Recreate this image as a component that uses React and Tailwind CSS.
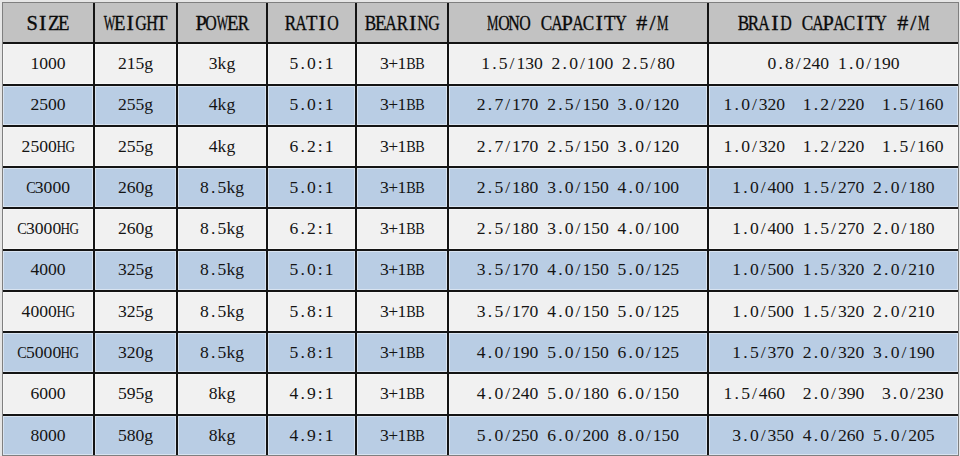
const headers = ['SIZE', 'WEIGHT', 'POWER', 'RATIO', 'BEARING', 'MONO CAPACITY #/M', 'BRAID CAPACITY #/M'];

const rows = [
    ['1000', '215g', '3kg', '5.0:1', '3+1BB', '1.5/130 2.0/100 2.5/80', '0.8/240 1.0/190'],
    ['2500', '255g', '4kg', '5.0:1', '3+1BB', '2.7/170 2.5/150 3.0/120', '1.0/320  1.2/220  1.5/160'],
    ['2500HG', '255g', '4kg', '6.2:1', '3+1BB', '2.7/170 2.5/150 3.0/120', '1.0/320  1.2/220  1.5/160'],
    ['C3000', '260g', '8.5kg', '5.0:1', '3+1BB', '2.5/180 3.0/150 4.0/100', '1.0/400 1.5/270 2.0/180'],
    ['C3000HG', '260g', '8.5kg', '6.2:1', '3+1BB', '2.5/180 3.0/150 4.0/100', '1.0/400 1.5/270 2.0/180'],
    ['4000', '325g', '8.5kg', '5.0:1', '3+1BB', '3.5/170 4.0/150 5.0/125', '1.0/500 1.5/320 2.0/210'],
    ['4000HG', '325g', '8.5kg', '5.8:1', '3+1BB', '3.5/170 4.0/150 5.0/125', '1.0/500 1.5/320 2.0/210'],
    ['C5000HG', '320g', '8.5kg', '5.8:1', '3+1BB', '4.0/190 5.0/150 6.0/125', '1.5/370 2.0/320 3.0/190'],
    ['6000', '595g', '8kg', '4.9:1', '3+1BB', '4.0/240 5.0/180 6.0/150', '1.5/460  2.0/390  3.0/230'],
    ['8000', '580g', '8kg', '4.9:1', '3+1BB', '5.0/250 6.0/200 8.0/150', '3.0/350 4.0/260 5.0/205'],
];

// rough glyph widths (em) of the serif caps, so each letter can be squeezed into a half-width cell
const capWidth = {
    A: 0.72, B: 0.67, C: 0.67, D: 0.72, E: 0.61, G: 0.72, H: 0.72, I: 0.33, M: 0.89,
    N: 0.72, O: 0.72, P: 0.56, R: 0.67, S: 0.56, T: 0.61, W: 0.94, Y: 0.72, Z: 0.61, '#': 0.5,
};

function HalfWidth({ text, head }) {
    return (
        <span className="inline-flex whitespace-nowrap">
            {text.split('').map((ch, i) => {
                const w = capWidth[ch];
                const sx = w ? Math.min(1, (head ? 0.52 : 0.54) / w) : 1;
                return (
                    <span
                        key={i}
                        className={`inline-flex justify-center ${head ? 'w-[10.65px]' : 'w-[8.8px]'}`}
                    >
                        {w ? (
                            <span className="inline-block" style={{ transform: `scaleX(${sx})` }}>{ch}</span>
                        ) : (
                            ch
                        )}
                    </span>
                );
            })}
        </span>
    );
}

export default function App() {
    return (
        <div className="w-[960px] h-[456px] bg-[#e6e6e6] pl-[2px] pt-[2px] pr-[1px] overflow-hidden">
            <div className="h-full border border-[#7f7f7f]">
                <div className="h-full grid grid-cols-[90px_81px_88px_87px_90px_258px_minmax(0,1fr)] grid-rows-[repeat(11,minmax(0,1fr))] gap-[2px] bg-[#141414]">
                    {headers.map((h) => (
                        <div
                            key={h}
                            className="min-w-0 flex items-center justify-center bg-[#c2c2c2] text-[#0a0a0a] font-['Liberation_Serif',serif] text-[22px] leading-none [-webkit-text-stroke:0.35px_#0a0a0a]"
                        >
                            <HalfWidth text={h} head />
                        </div>
                    ))}
                    {rows.map((row, r) =>
                        row.map((cell, c) => (
                            <div
                                key={`${r}-${c}`}
                                className={`min-w-0 flex items-center justify-center text-[#141414] font-['Liberation_Serif',serif] text-[17.6px] leading-none shadow-[inset_0_0_0_1px_rgba(255,255,255,0.45)] ${r % 2 === 0 ? 'bg-[#f1f1f1]' : 'bg-[#b9cde4]'}`}
                            >
                                <HalfWidth text={cell} />
                            </div>
                        ))
                    )}
                </div>
            </div>
        </div>
    );
}
